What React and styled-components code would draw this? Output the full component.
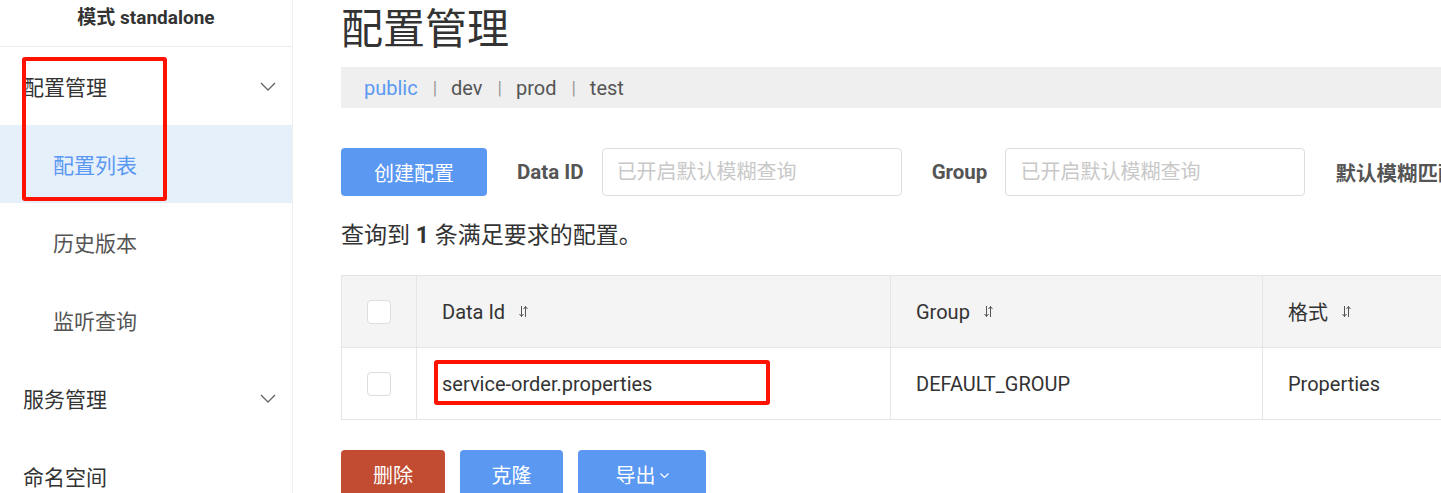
import React from 'react';
import styled, { createGlobalStyle } from 'styled-components';

const GlobalStyle = createGlobalStyle`
  html, body {
    margin: 0;
    padding: 0;
    background: #fff;
    overflow: hidden;
  }
  body {
    font-family: Roboto, "Noto Sans CJK SC", "Noto Sans", sans-serif;
    color: #333;
  }
  * {
    box-sizing: border-box;
  }
`;

const menu = [
  { label: '配置管理', level: 1, arrow: true },
  { label: '配置列表', level: 2, active: true },
  { label: '历史版本', level: 2 },
  { label: '监听查询', level: 2 },
  { label: '服务管理', level: 1, arrow: true },
  { label: '命名空间', level: 1 },
];

const tabs = ['public', 'dev', 'prod', 'test'];

const columns = [
  { title: 'Data Id', width: 474 },
  { title: 'Group', width: 372 },
  { title: '格式', width: 400 },
];

const rows = [{ dataId: 'service-order.properties', group: 'DEFAULT_GROUP', type: 'Properties' }];

const Chevron = ({ size = 16 }) => (
  <svg width={size} height={size / 2 + 1} viewBox="0 0 16 9" fill="none">
    <path d="M1 1l7 7 7-7" stroke="#666" strokeWidth="1.3" />
  </svg>
);

const SortIcon = () => (
  <svg width="9" height="13" viewBox="0 0 9 13" fill="none">
    <path d="M2.5 1v10.5M0.5 9l2 2.5 2-2.5" stroke="#555" strokeWidth="1" />
    <path d="M6.5 12V1.5M4.5 4l2-2.5 2 2.5" stroke="#555" strokeWidth="1" />
  </svg>
);

const App = () => {
  return (
    <Page>
      <GlobalStyle />
      <Sidebar>
        <Brand>模式 standalone</Brand>
        <Menu>
          {menu.map((item) => (
            <MenuItem key={item.label} $level={item.level} $active={item.active}>
              <span>{item.label}</span>
              {item.arrow && <Chevron />}
            </MenuItem>
          ))}
        </Menu>
      </Sidebar>

      <Main>
        <Title>配置管理</Title>
        <Tabs>
          {tabs.map((tab, i) => (
            <React.Fragment key={tab}>
              {i > 0 && <Sep>|</Sep>}
              <Tab $active={i === 0}>{tab}</Tab>
            </React.Fragment>
          ))}
        </Tabs>

        <Toolbar>
          <Button $color="#5a98f2" $width={146}>创建配置</Button>
          <Label>Data ID</Label>
          <Input placeholder="已开启默认模糊查询" />
          <Label>Group</Label>
          <Input placeholder="已开启默认模糊查询" />
          <Label>默认模糊匹配</Label>
        </Toolbar>

        <Count>
          查询到 <b>1</b> 条满足要求的配置。
        </Count>

        <Table>
          <thead>
            <tr>
              <Th $width={75}>
                <Check />
              </Th>
              {columns.map((col) => (
                <Th key={col.title} $width={col.width}>
                  <HeadText>
                    {col.title}
                    <SortIcon />
                  </HeadText>
                </Th>
              ))}
            </tr>
          </thead>
          <tbody>
            {rows.map((row) => (
              <tr key={row.dataId}>
                <Td>
                  <Check />
                </Td>
                <Td>{row.dataId}</Td>
                <Td>{row.group}</Td>
                <Td>{row.type}</Td>
              </tr>
            ))}
          </tbody>
        </Table>

        <Actions>
          <Button $color="#c14c31" $width={104}>删除</Button>
          <Button $color="#5a98f2" $width={103}>克隆</Button>
          <Button $color="#5a98f2" $width={128}>
            导出
            <SmallChevron>
              <svg width="9" height="5" viewBox="0 0 9 5" fill="none">
                <path d="M0.5 0.5l4 4 4-4" stroke="#fff" strokeWidth="1.2" />
              </svg>
            </SmallChevron>
          </Button>
        </Actions>
      </Main>

      <Mark $x={22} $y={57} $w={145} $h={144} />
      <Mark $x={434} $y={360} $w={336} $h={45} />
    </Page>
  );
};

const Page = styled.div`
  position: relative;
  display: flex;
  width: 1441px;
  height: 493px;
  overflow: hidden;
`;

const Sidebar = styled.div`
  flex: 0 0 293px;
  border-right: 1px solid #eee;
  display: flex;
  flex-direction: column;
  overflow: hidden;
`;

const Brand = styled.div`
  flex-shrink: 0;
  height: 47px;
  padding-top: 6px;
  border-bottom: 1px solid #eee;
  text-align: center;
  font-size: 19px;
  font-weight: 700;
  line-height: 24px;
  color: #333;
`;

const Menu = styled.ul`
  flex-shrink: 0;
  list-style: none;
  margin: 0;
  padding: 0;
`;

const MenuItem = styled.li`
  height: 78px;
  display: flex;
  align-items: center;
  justify-content: space-between;
  padding: 0 16px 0 ${(p) => (p.$level === 1 ? 23 : 53)}px;
  font-size: 21px;
  color: ${(p) => (p.$active ? '#5a98f2' : p.$level === 1 ? '#333' : '#555')};
  background: ${(p) => (p.$active ? '#e6f0fb' : 'transparent')};
`;

const Main = styled.div`
  flex: 1;
  min-width: 0;
  padding-left: 48px;
  overflow: hidden;
`;

const Title = styled.h1`
  margin: 0;
  height: 67px;
  font-size: 42px;
  font-weight: 400;
  line-height: 60px;
  color: #333;
`;

const Tabs = styled.div`
  display: flex;
  align-items: center;
  height: 41px;
  padding-left: 23px;
  background: #efefef;
  font-size: 20px;
`;

const Tab = styled.span`
  color: ${(p) => (p.$active ? '#5a98f2' : '#555')};
`;

const Sep = styled.span`
  margin: 0 14px 0 15px;
  color: #999;
  font-size: 18px;
`;

const Toolbar = styled.div`
  display: flex;
  align-items: center;
  margin-top: 40px;
  height: 48px;
  white-space: nowrap;
`;

const Button = styled.button`
  display: inline-flex;
  align-items: center;
  justify-content: center;
  flex: 0 0 ${(p) => p.$width}px;
  height: 48px;
  border: none;
  border-radius: 4px;
  background: ${(p) => p.$color};
  color: #fff;
  font-family: inherit;
  font-size: 20px;
  padding: 0;
`;

const Label = styled.span`
  margin: 0 18px 0 30px;
  font-size: 20.5px;
  font-weight: 700;
  color: #555;
`;

const Input = styled.input`
  flex: 0 0 300px;
  height: 48px;
  border: 1px solid #ddd;
  border-radius: 4px;
  padding: 0 14px;
  font-family: inherit;
  font-size: 20px;
  outline: none;

  &::placeholder {
    color: #c8c8c8;
  }
`;

const Count = styled.div`
  margin-top: 24px;
  font-size: 23px;
  line-height: 32px;
  color: #333;

  b {
    font-weight: 700;
  }
`;

const Table = styled.table`
  margin-top: 23px;
  border-collapse: collapse;
  table-layout: fixed;
  width: 1321px;
  font-size: 20px;
  color: #333;
`;

const Th = styled.th`
  width: ${(p) => p.$width}px;
  height: 72px;
  padding: 0 0 0 25px;
  text-align: left;
  font-weight: 400;
  background: #f4f4f4;
  border: 1px solid #e6e6e6;
`;

const HeadText = styled.span`
  display: inline-flex;
  align-items: center;
  gap: 14px;
`;

const Td = styled.td`
  height: 72px;
  padding: 0 0 0 25px;
  border: 1px solid #e6e6e6;
`;

const Check = styled.span`
  display: block;
  width: 24px;
  height: 24px;
  border: 1px solid #ddd;
  border-radius: 4px;
  background: #fff;
`;

const Actions = styled.div`
  display: flex;
  gap: 15px;
  margin-top: 30px;
`;

const SmallChevron = styled.span`
  display: inline-flex;
  margin-left: 4px;
  padding-top: 2px;
`;

const Mark = styled.div`
  position: absolute;
  left: ${(p) => p.$x}px;
  top: ${(p) => p.$y}px;
  width: ${(p) => p.$w}px;
  height: ${(p) => p.$h}px;
  border: 4px solid #ff1200;
  border-radius: 3px;
  pointer-events: none;
`;

export default App;
